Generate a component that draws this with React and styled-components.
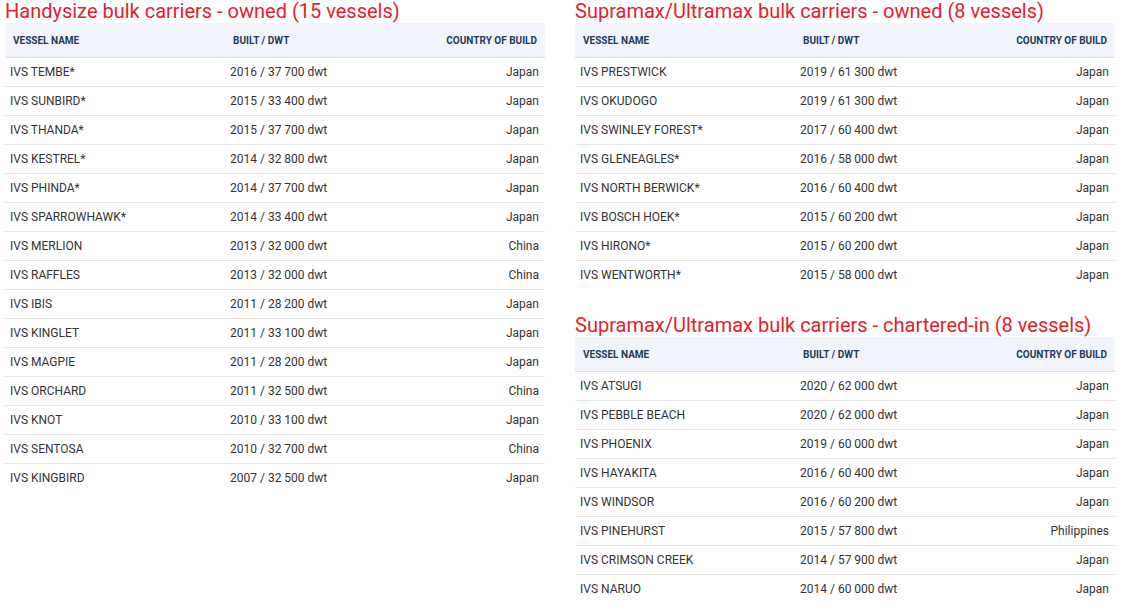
import styled, { createGlobalStyle } from 'styled-components'

const GlobalStyle = createGlobalStyle`
  * { box-sizing: border-box; }
  body {
    margin: 0;
    background: #fff;
    font-family: Roboto, "Liberation Sans", Arial, sans-serif;
  }
`

const Page = styled.div`
  display: grid;
  grid-template-columns: 540px 540px;
  column-gap: 30px;
  padding: 0 0 0 5px;
  align-items: start;
`

const Column = styled.div`
  display: flex;
  flex-direction: column;
`

const Section = styled.section`
  margin-top: ${({ $gap }) => $gap || 0}px;
`

const Title = styled.h2`
  margin: 0;
  font-size: 20px;
  line-height: 22px;
  padding-bottom: 1px;
  font-weight: 400;
  color: #e3212b;
  white-space: nowrap;
`

const Table = styled.div`
  display: flex;
  flex-direction: column;
`

const Row = styled.div`
  display: grid;
  grid-template-columns: 220px 1fr auto;
  align-items: center;
`

const HeadRow = styled(Row)`
  height: 35px;
  background: #f1f5fb;
  border-bottom: 1px solid #dedede;
  padding: 0 8px;
`

const HeadCell = styled.div`
  font-size: 10px;
  font-weight: 700;
  color: #1c3b5e;
  text-transform: uppercase;
  text-align: ${({ $right }) => ($right ? 'right' : 'left')};
`

const BodyRow = styled(Row)`
  height: 29px;
  padding: 0 6px 0 5px;
  border-bottom: 1px solid #e4e4e4;
  &:last-child {
    border-bottom: none;
    height: 28px;
  }
`

const Cell = styled.div`
  font-size: 12px;
  color: #333;
  text-align: ${({ $right }) => ($right ? 'right' : 'left')};
  white-space: nowrap;
`

const handysize = [
  ['IVS TEMBE*', '2016 / 37 700 dwt', 'Japan'],
  ['IVS SUNBIRD*', '2015 / 33 400 dwt', 'Japan'],
  ['IVS THANDA*', '2015 / 37 700 dwt', 'Japan'],
  ['IVS KESTREL*', '2014 / 32 800 dwt', 'Japan'],
  ['IVS PHINDA*', '2014 / 37 700 dwt', 'Japan'],
  ['IVS SPARROWHAWK*', '2014 / 33 400 dwt', 'Japan'],
  ['IVS MERLION', '2013 / 32 000 dwt', 'China'],
  ['IVS RAFFLES', '2013 / 32 000 dwt', 'China'],
  ['IVS IBIS', '2011 / 28 200 dwt', 'Japan'],
  ['IVS KINGLET', '2011 / 33 100 dwt', 'Japan'],
  ['IVS MAGPIE', '2011 / 28 200 dwt', 'Japan'],
  ['IVS ORCHARD', '2011 / 32 500 dwt', 'China'],
  ['IVS KNOT', '2010 / 33 100 dwt', 'Japan'],
  ['IVS SENTOSA', '2010 / 32 700 dwt', 'China'],
  ['IVS KINGBIRD', '2007 / 32 500 dwt', 'Japan'],
]

const supraOwned = [
  ['IVS PRESTWICK', '2019 / 61 300 dwt', 'Japan'],
  ['IVS OKUDOGO', '2019 / 61 300 dwt', 'Japan'],
  ['IVS SWINLEY FOREST*', '2017 / 60 400 dwt', 'Japan'],
  ['IVS GLENEAGLES*', '2016 / 58 000 dwt', 'Japan'],
  ['IVS NORTH BERWICK*', '2016 / 60 400 dwt', 'Japan'],
  ['IVS BOSCH HOEK*', '2015 / 60 200 dwt', 'Japan'],
  ['IVS HIRONO*', '2015 / 60 200 dwt', 'Japan'],
  ['IVS WENTWORTH*', '2015 / 58 000 dwt', 'Japan'],
]

const supraChartered = [
  ['IVS ATSUGI', '2020 / 62 000 dwt', 'Japan'],
  ['IVS PEBBLE BEACH', '2020 / 62 000 dwt', 'Japan'],
  ['IVS PHOENIX', '2019 / 60 000 dwt', 'Japan'],
  ['IVS HAYAKITA', '2016 / 60 400 dwt', 'Japan'],
  ['IVS WINDSOR', '2016 / 60 200 dwt', 'Japan'],
  ['IVS PINEHURST', '2015 / 57 800 dwt', 'Philippines'],
  ['IVS CRIMSON CREEK', '2014 / 57 900 dwt', 'Japan'],
  ['IVS NARUO', '2014 / 60 000 dwt', 'Japan'],
]

function FleetTable({ title, vessels, gap }) {
  return (
    <Section $gap={gap}>
      <Title>{title}</Title>
      <Table>
        <HeadRow>
          <HeadCell>Vessel name</HeadCell>
          <HeadCell>Built / DWT</HeadCell>
          <HeadCell $right>Country of build</HeadCell>
        </HeadRow>
        {vessels.map(([name, built, country]) => (
          <BodyRow key={name}>
            <Cell>{name}</Cell>
            <Cell>{built}</Cell>
            <Cell $right>{country}</Cell>
          </BodyRow>
        ))}
      </Table>
    </Section>
  )
}

export default function App() {
  return (
    <>
      <GlobalStyle />
      <Page>
        <Column>
          <FleetTable title="Handysize bulk carriers - owned (15 vessels)" vessels={handysize} />
        </Column>
        <Column>
          <FleetTable title="Supramax/Ultramax bulk carriers - owned (8 vessels)" vessels={supraOwned} />
          <FleetTable
            title="Supramax/Ultramax bulk carriers - chartered-in (8 vessels)"
            vessels={supraChartered}
            gap={25}
          />
        </Column>
      </Page>
    </>
  )
}
